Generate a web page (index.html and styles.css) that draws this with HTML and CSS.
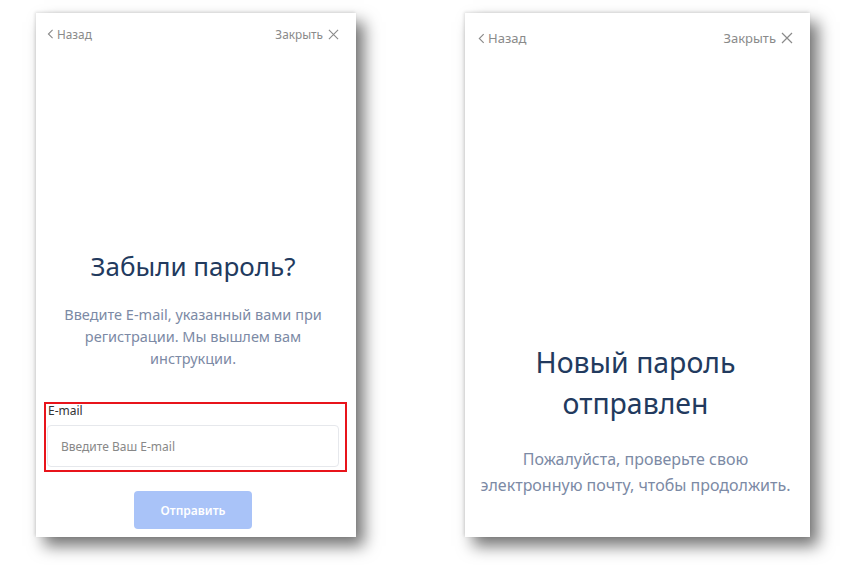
FILE: index.html
```html
<!DOCTYPE html>
<html lang="ru">
<head>
<meta charset="utf-8">
<title>Восстановление пароля</title>
<link rel="stylesheet" href="styles.css">
</head>
<body>
<div class="screens">
  <section class="card card-left">
    <header class="topbar topbar-left">
      <a class="nav back">
        <svg class="chev" viewBox="0 0 8 12" width="7" height="10"><path d="M6.5 1 L1.5 6 L6.5 11" fill="none" stroke="#8a8a8a" stroke-width="1.3"/></svg>
        <span>Назад</span>
      </a>
      <a class="nav close">
        <span>Закрыть</span>
        <svg class="x" viewBox="0 0 12 12" width="11" height="11"><path d="M1 1 L11 11 M11 1 L1 11" fill="none" stroke="#8a8a8a" stroke-width="1.2"/></svg>
      </a>
    </header>
    <div class="content">
      <h1 class="title title-left">Забыли пароль?</h1>
      <p class="lead lead-left">Введите E-mail, указанный вами при регистрации. Мы вышлем вам инструкции.</p>
      <div class="field">
        <label class="label">E-mail</label>
        <div class="input">Введите Ваш E-mail</div>
      </div>
      <div class="actions">
        <button class="btn">Отправить</button>
      </div>
    </div>
  </section>

  <section class="card card-right">
    <header class="topbar topbar-right">
      <a class="nav back">
        <svg class="chev" viewBox="0 0 8 12" width="7" height="11"><path d="M6.5 1 L1.5 6 L6.5 11" fill="none" stroke="#8a8a8a" stroke-width="1.3"/></svg>
        <span>Назад</span>
      </a>
      <a class="nav close">
        <span>Закрыть</span>
        <svg class="x" viewBox="0 0 12 12" width="12" height="12"><path d="M1 1 L11 11 M11 1 L1 11" fill="none" stroke="#8a8a8a" stroke-width="1.2"/></svg>
      </a>
    </header>
    <div class="content content-right">
      <h1 class="title title-right">Новый пароль<br>отправлен</h1>
      <p class="lead lead-right">Пожалуйста, проверьте свою<br>электронную почту, чтобы продолжить.</p>
    </div>
  </section>
</div>
</body>
</html>
```

FILE: styles.css
```css
* { box-sizing: border-box; }
html, body { margin: 0; padding: 0; background: #ffffff; }
body {
  font-family: "Noto Sans", "Open Sans", sans-serif;
  width: 845px;
  height: 565px;
  overflow: hidden;
}
.screens {
  display: flex;
  gap: 109px;
  padding: 13px 0 0 36px;
}
.card {
  background: #fff;
  height: 524px;
  box-shadow: 8px 9px 15px rgba(0, 0, 0, 0.55), -1px -1px 3px rgba(0,0,0,0.12);
  display: flex;
  flex-direction: column;
}
.card-left { width: 320px; padding: 0 17px 0 11px; }
.card-right { width: 345px; padding: 0 17px 0 13px; }

.topbar {
  display: flex;
  justify-content: space-between;
  align-items: center;
  padding-top: 13px;
  height: 29px;
  font-size: 13px;
  line-height: 16px;
  color: #8a8a8a;
}
.topbar-left { font-size: 11.8px; }
.topbar-right { padding-top: 17px; height: 33px; }
.nav { display: flex; align-items: center; gap: 3px; }
.close { gap: 5px; }
.chev, .x { display: block; }

.content { display: flex; flex-direction: column; align-items: center; }
.title {
  margin: 0;
  font-weight: 400;
  color: #223a5e;
  text-align: center;
}
.title-left { font-size: 26px; line-height: 36px; margin-top: 206px; }
.lead {
  margin: 0;
  color: #7c8aa5;
  text-align: center;
}
.lead-left { font-size: 14.5px; line-height: 22px; margin-top: 19px; padding: 0 12px; }

.field {
  align-self: stretch;
  border: 2px solid #e8141b;
  margin: 33px -8px 0 -3px;
  padding: 0 6px 3px 1px;
}
.label {
  display: block;
  font-size: 12px;
  line-height: 14px;
  color: #333;
  padding-left: 1px;
}
.input {
  margin-top: 7px;
  height: 42px;
  border: 1px solid #e6e8ec;
  border-radius: 4px;
  padding: 0 13px;
  display: flex;
  align-items: center;
  font-size: 12px;
  color: #888;
}
.actions { margin-top: 19px; }
.btn {
  width: 118px;
  height: 38px;
  border: 0;
  border-radius: 4px;
  background: #a9c3f8;
  color: #fff;
  font-family: inherit;
  font-size: 12px;
  font-weight: 600;
}

.title-right { font-size: 28.4px; line-height: 41px; margin-top: 296px; }
.lead-right { font-size: 16px; line-height: 26px; margin-top: 22px; }
```
